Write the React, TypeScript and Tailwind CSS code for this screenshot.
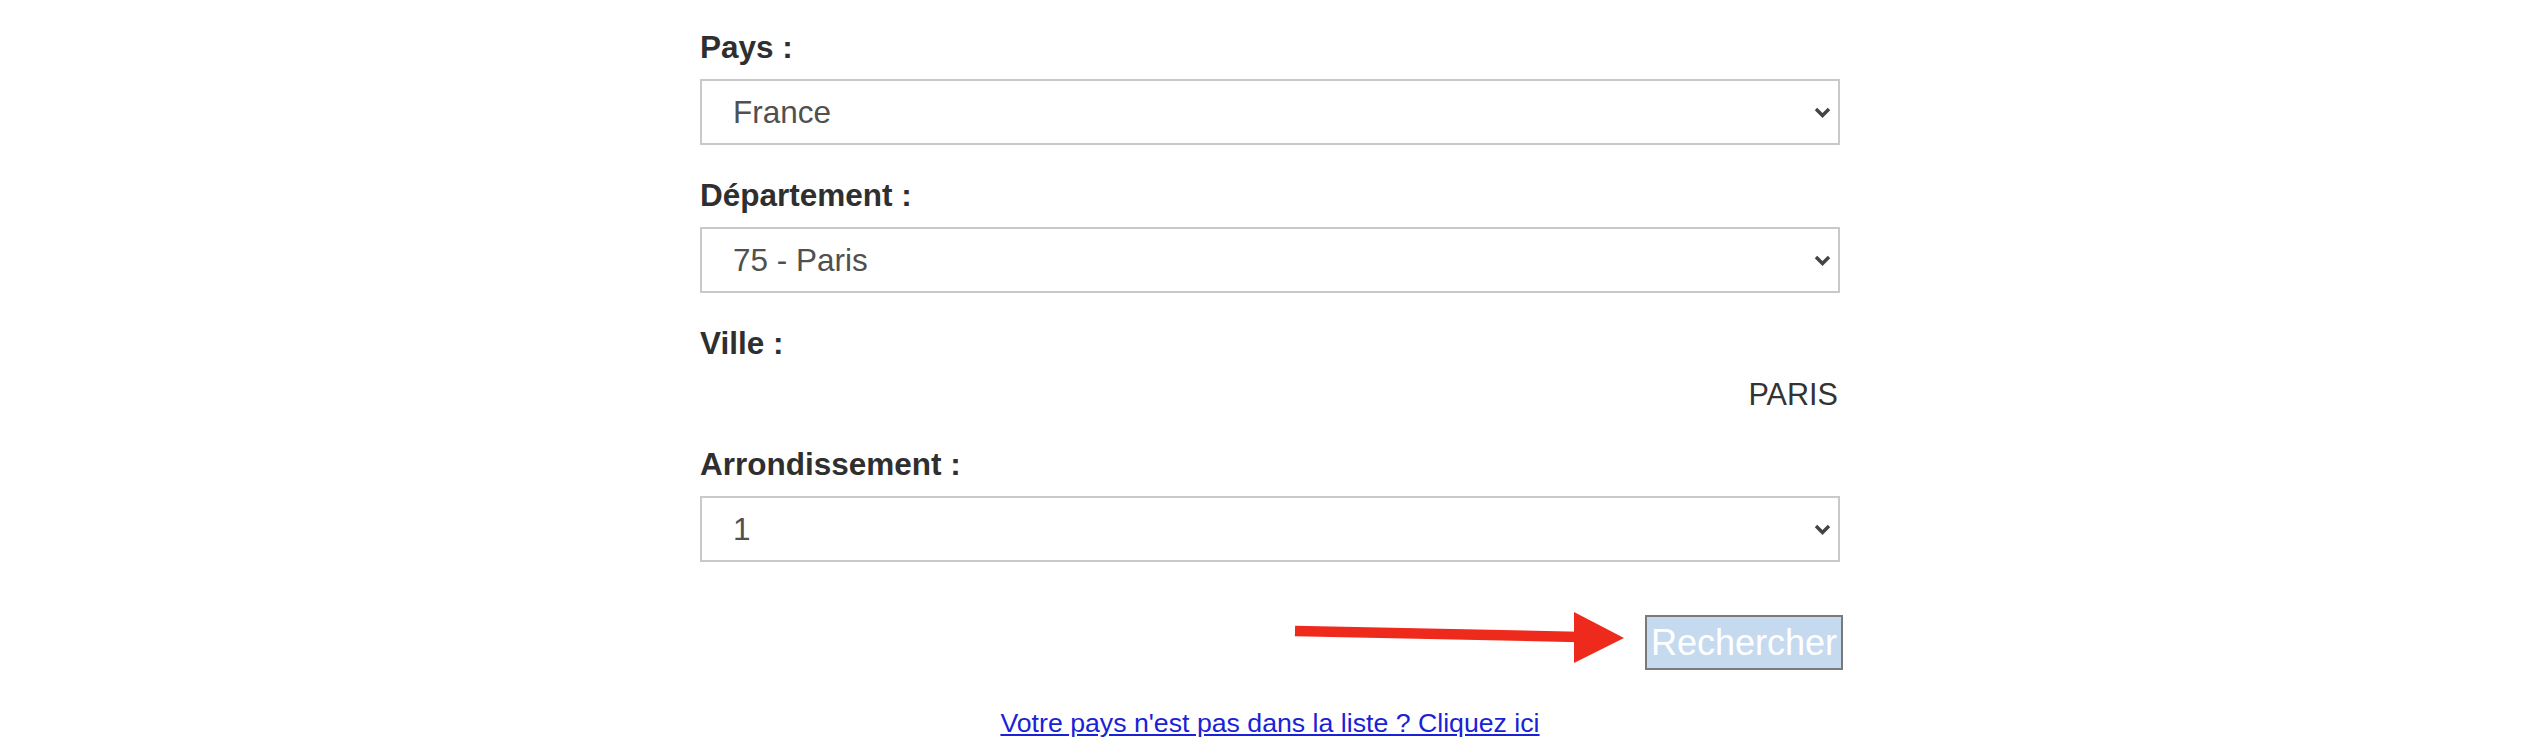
import React from "react";

function Chevron() {
  return (
    <svg width="17" height="11" viewBox="0 0 17 11" className="shrink-0">
      <polyline points="2,2 8.5,8.5 15,2" fill="none" stroke="#444444" strokeWidth="3.4" strokeLinecap="butt" strokeLinejoin="miter" />
    </svg>
  );
}

function FakeSelect({ value }: { value: string }) {
  return (
    <div className="mt-[12px] flex h-[66px] w-[1140px] items-center justify-between border-2 border-[#c9c9c9] bg-white pl-[31px] pr-[7px]">
      <span className="text-[31.5px] leading-[40px] text-[#505050]">{value}</span>
      <Chevron />
    </div>
  );
}

function Label({ children, first }: { children: React.ReactNode; first?: boolean }) {
  return (
    <div className={`${first ? "" : "mt-[30px]"} h-[40px] text-[31.5px] font-bold leading-[40px] text-[#2f2f2f]`}>
      {children}
    </div>
  );
}

export default function App() {
  return (
    <div className="min-h-[740px] w-full bg-white" style={{ fontFamily: '"Liberation Sans", Arial, Helvetica, sans-serif' }}>
      <div className="mx-auto w-[1156px] pl-[16px] pt-[27px]">
        <div className="w-[1140px]">
          <Label first>Pays :</Label>
          <FakeSelect value="France" />

          <Label>Département :</Label>
          <FakeSelect value="75 - Paris" />

          <Label>Ville :</Label>
          <div className="mt-[11px] h-[40px] pr-[2px] text-right text-[30.6px] leading-[40px] text-[#333333]">PARIS</div>

          <Label>Arrondissement :</Label>
          <FakeSelect value="1" />

          <div className="relative mt-[53px] flex justify-end">
            <svg className="absolute left-[590px] top-[-6px]" width="340" height="62" viewBox="0 0 340 62">
              <line x1="5" y1="22" x2="290" y2="28" stroke="#ee2a1d" strokeWidth="10.5" />
              <polygon points="284,3 334,29 284,54" fill="#ee2a1d" />
            </svg>
            <button className="-mr-[3px] flex h-[55px] w-[198px] items-center justify-center border-2 border-[#7a7a7a] bg-[#c6daef] text-[36px] leading-[41px] text-white">
              Rechercher
            </button>
          </div>

          <div className="mt-[37px] text-center">
            <a href="#" className="text-[26.7px] leading-[32px] text-[#1a22d6] underline">
              Votre pays n'est pas dans la liste ? Cliquez ici
            </a>
          </div>
        </div>
      </div>
    </div>
  );
}
